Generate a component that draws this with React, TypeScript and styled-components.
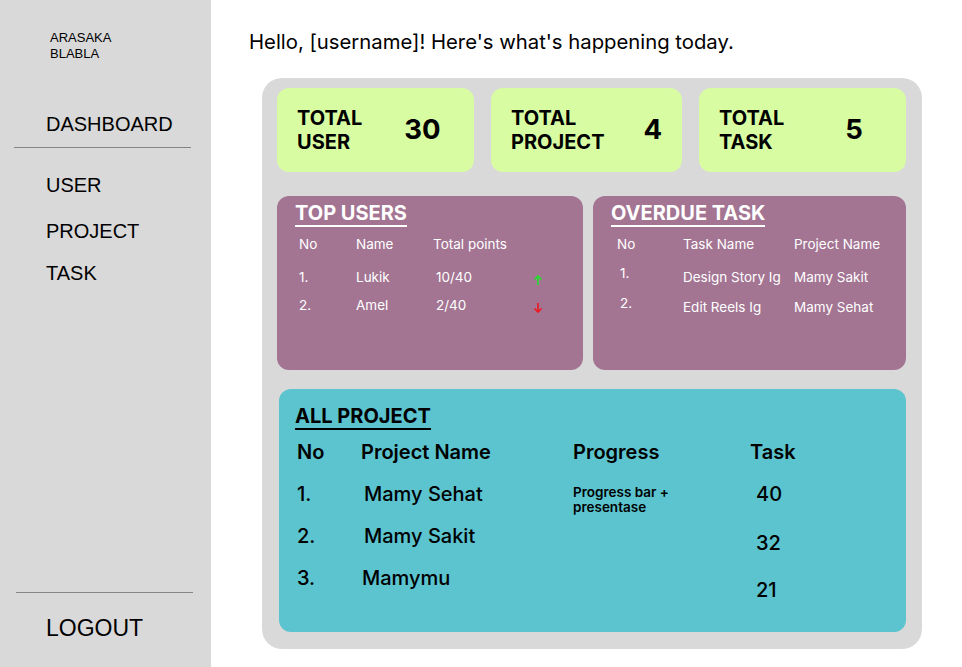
import React from 'react';
import styled, { createGlobalStyle } from 'styled-components';

// Data
interface StatItem {
  label: [string, string];
  value: string;
  width: number;
  numberGap: number;
}

const stats: StatItem[] = [
  { label: ['TOTAL', 'USER'], value: '30', width: 197, numberGap: 42 },
  { label: ['TOTAL', 'PROJECT'], value: '4', width: 191, numberGap: 39 },
  { label: ['TOTAL', 'TASK'], value: '5', width: 207, numberGap: 61 },
];

const topUsers = [
  { no: '1.', name: 'Lukik', points: '10/40', up: true },
  { no: '2.', name: 'Amel', points: '2/40', up: false },
];

const overdue = [
  { no: '1.', task: 'Design Story Ig', project: 'Mamy Sakit' },
  { no: '2.', task: 'Edit Reels Ig', project: 'Mamy Sehat' },
];

const projects = [
  { no: '1.', name: 'Mamy Sehat', shift: 3, task: '40', taskDrop: 0, progress: true },
  { no: '2.', name: 'Mamy Sakit', shift: 3, task: '32', taskDrop: 7, progress: false },
  { no: '3.', name: 'Mamymu', shift: 1, task: '21', taskDrop: 12, progress: false },
];

// Styled components
const GlobalStyle = createGlobalStyle`
  html, body {
    margin: 0;
    padding: 0;
    background: #ffffff;
  }
  body {
    font-family: Inter, "Noto Sans", sans-serif;
    color: #000;
  }
`;

const Layout = styled.div`
  display: flex;
  width: 962px;
  height: 667px;
  overflow: hidden;
`;

const Sidebar = styled.aside`
  width: 211px;
  flex-shrink: 0;
  background: #d9d9d9;
  display: flex;
  flex-direction: column;
  font-family: "Liberation Sans", Arial, sans-serif;
`;

const Brand = styled.div`
  margin: 30px 0 0 50px;
  font-size: 13px;
  line-height: 16px;
`;

const NavItem = styled.div<{ $top: number }>`
  margin: ${(p) => p.$top}px 0 0 46px;
  font-size: 20px;
  line-height: 24px;
`;

const Divider = styled.hr<{ $left: number }>`
  margin: 11px 0 0 ${(p) => p.$left}px;
  width: 177px;
  border: none;
  border-top: 1px solid #858585;
  height: 0;
`;

const SidebarFooter = styled.div`
  margin-top: auto;
  padding-bottom: 25px;
`;

const Logout = styled.div`
  margin: 21px 0 0 46px;
  font-size: 23px;
  line-height: 28px;
`;

const Main = styled.main`
  flex: 1;
  padding: 30px 0 0 38px;
`;

const Greeting = styled.h1`
  margin: 0;
  font-size: 20.3px;
  font-weight: 400;
  line-height: 24px;
`;

const Panel = styled.section`
  margin: 24px 0 0 13px;
  width: 660px;
  height: 571px;
  box-sizing: border-box;
  background: #d9d9d9;
  border-radius: 20px;
  padding: 10px 16px 0 15px;
  display: flex;
  flex-direction: column;
`;

const StatRow = styled.div`
  display: flex;
  gap: 17px;
`;

const StatCard = styled.div<{ $width: number }>`
  width: ${(p) => p.$width}px;
  height: 84px;
  box-sizing: border-box;
  background: #d8fca2;
  border-radius: 12px;
  padding-left: 20px;
  display: flex;
  align-items: center;
`;

const StatLabel = styled.div`
  font-size: 20px;
  font-weight: 700;
  line-height: 24px;
`;

const StatValue = styled.div<{ $gap: number }>`
  margin: 0 0 3px ${(p) => p.$gap}px;
  font-size: 27.5px;
  font-weight: 700;
`;

const MidRow = styled.div`
  display: flex;
  gap: 10px;
  margin-top: 24px;
`;

const PurpleCard = styled.div<{ $width: number }>`
  width: ${(p) => p.$width}px;
  height: 174px;
  box-sizing: border-box;
  background: #a37593;
  border-radius: 12px;
  color: #fff;
  padding: 5px 0 0 18px;
`;

const CardTitle = styled.h2<{ $dark?: boolean }>`
  display: inline-block;
  margin: 0;
  font-size: 20px;
  font-weight: 700;
  line-height: 24px;
  color: ${(p) => (p.$dark ? '#000' : '#fff')};
  border-bottom: 2px solid ${(p) => (p.$dark ? '#000' : '#fff')};
`;

const SmallTable = styled.div<{ $cols: string; $row: number }>`
  display: grid;
  grid-template-columns: ${(p) => p.$cols};
  grid-template-rows: 33px;
  grid-auto-rows: ${(p) => p.$row}px;
  font-size: 13.5px;
  line-height: 16px;
  margin-top: 9px;
`;

const SmallCell = styled.div<{ $dx?: number; $dy?: number }>`
  padding-left: ${(p) => p.$dx ?? 0}px;
  margin-top: ${(p) => p.$dy ?? 0}px;
`;

const ArrowCell = styled.div`
  padding-top: 3px;
`;

const ProjectCard = styled.div`
  margin: 19px 0 0 2px;
  width: 627px;
  height: 243px;
  box-sizing: border-box;
  background: #5bc4cf;
  border-radius: 12px;
  padding: 15px 0 0 16px;
`;

const ProjectTable = styled.div`
  display: grid;
  grid-template-columns: 64px 212px 177px auto;
  grid-auto-rows: 42px;
  margin: 10px 0 0 2px;
  font-size: 20px;
  line-height: 24px;
  font-weight: 500;
`;

const HeadCell = styled.div`
  font-weight: 600;
`;

const ProjectCell = styled.div<{ $dx?: number; $dy?: number }>`
  padding-left: ${(p) => p.$dx ?? 0}px;
  margin-top: ${(p) => p.$dy ?? 0}px;
`;

const ProgressNote = styled.div`
  font-size: 13.5px;
  line-height: 15px;
  font-weight: 600;
  margin-top: 3px;
`;

const Arrow: React.FC<{ up: boolean }> = ({ up }) => (
  <svg width="10" height="10" viewBox="0 0 10 10">
    <g
      stroke={up ? '#1fe02a' : '#f0161b'}
      strokeWidth="1.6"
      fill="none"
      transform={up ? undefined : 'rotate(180 5 5)'}
    >
      <line x1="5" y1="1" x2="5" y2="10" />
      <polyline points="1.5,4.5 5,1 8.5,4.5" />
    </g>
  </svg>
);

const App: React.FC = () => {
  return (
    <>
      <GlobalStyle />
      <Layout>
        <Sidebar>
          <Brand>
            ARASAKA
            <br />
            BLABLA
          </Brand>
          <NavItem $top={50}>DASHBOARD</NavItem>
          <Divider $left={14} />
          <NavItem $top={25}>USER</NavItem>
          <NavItem $top={22}>PROJECT</NavItem>
          <NavItem $top={18}>TASK</NavItem>
          <SidebarFooter>
            <Divider $left={16} />
            <Logout>LOGOUT</Logout>
          </SidebarFooter>
        </Sidebar>

        <Main>
          <Greeting>Hello, [username]! Here's what's happening today.</Greeting>
          <Panel>
            <StatRow>
              {stats.map((s) => (
                <StatCard key={s.label[1]} $width={s.width}>
                  <StatLabel>
                    {s.label[0]}
                    <br />
                    {s.label[1]}
                  </StatLabel>
                  <StatValue $gap={s.numberGap}>{s.value}</StatValue>
                </StatCard>
              ))}
            </StatRow>

            <MidRow>
              <PurpleCard $width={306}>
                <CardTitle>TOP USERS</CardTitle>
                <SmallTable $cols="61px 77px 100px auto" $row={28}>
                  <SmallCell $dx={4}>No</SmallCell>
                  <SmallCell>Name</SmallCell>
                  <SmallCell>Total points</SmallCell>
                  <SmallCell />
                  {topUsers.map((u) => (
                    <React.Fragment key={u.no}>
                      <SmallCell $dx={4}>{u.no}</SmallCell>
                      <SmallCell>{u.name}</SmallCell>
                      <SmallCell $dx={3}>{u.points}</SmallCell>
                      <ArrowCell>
                        <Arrow up={u.up} />
                      </ArrowCell>
                    </React.Fragment>
                  ))}
                </SmallTable>
              </PurpleCard>

              <PurpleCard $width={313}>
                <CardTitle>OVERDUE TASK</CardTitle>
                <SmallTable $cols="72px 111px auto" $row={30}>
                  <SmallCell $dx={6}>No</SmallCell>
                  <SmallCell>Task Name</SmallCell>
                  <SmallCell>Project Name</SmallCell>
                  {overdue.map((o) => (
                    <React.Fragment key={o.no}>
                      <SmallCell $dx={9} $dy={-4}>
                        {o.no}
                      </SmallCell>
                      <SmallCell>{o.task}</SmallCell>
                      <SmallCell>{o.project}</SmallCell>
                    </React.Fragment>
                  ))}
                </SmallTable>
              </PurpleCard>
            </MidRow>

            <ProjectCard>
              <CardTitle $dark>ALL PROJECT</CardTitle>
              <ProjectTable>
                <HeadCell>No</HeadCell>
                <HeadCell>Project Name</HeadCell>
                <HeadCell>Progress</HeadCell>
                <HeadCell>Task</HeadCell>
                {projects.map((p) => (
                  <React.Fragment key={p.no}>
                    <ProjectCell>{p.no}</ProjectCell>
                    <ProjectCell $dx={p.shift}>{p.name}</ProjectCell>
                    <ProjectCell>
                      {p.progress && (
                        <ProgressNote>
                          Progress bar +
                          <br />
                          presentase
                        </ProgressNote>
                      )}
                    </ProjectCell>
                    <ProjectCell $dx={6} $dy={p.taskDrop}>
                      {p.task}
                    </ProjectCell>
                  </React.Fragment>
                ))}
              </ProjectTable>
            </ProjectCard>
          </Panel>
        </Main>
      </Layout>
    </>
  );
};

export default App;
